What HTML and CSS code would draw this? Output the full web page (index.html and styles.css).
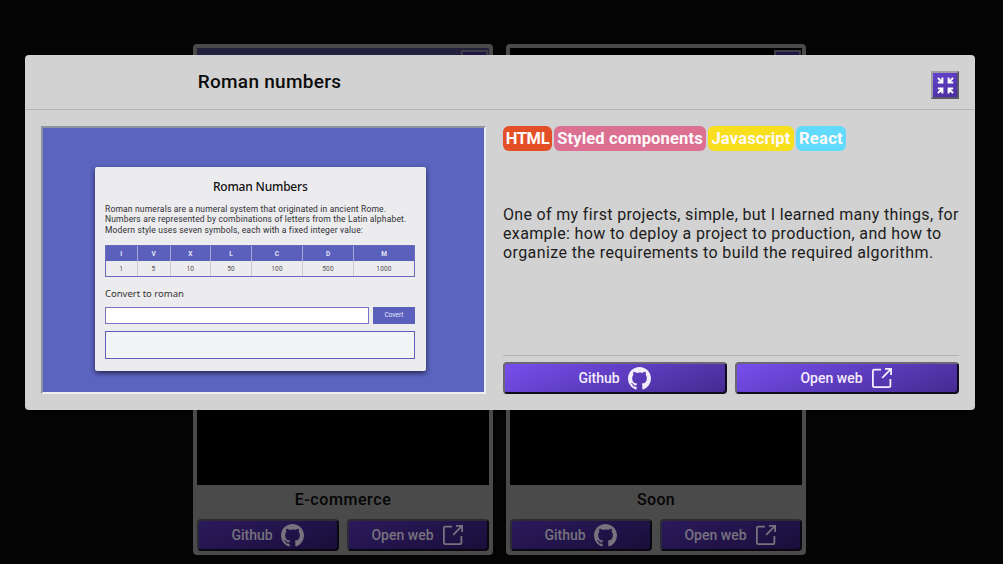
FILE: index.html
```
<!DOCTYPE html>
<html lang="en">
<head>
<meta charset="utf-8">
<title>Projects</title>
<link rel="stylesheet" href="styles.css">
</head>
<body>
<svg class="sprite" aria-hidden="true">
  <symbol id="github" viewBox="0 0 16 16"><path fill="currentColor" fill-rule="evenodd" d="M8 0C3.58 0 0 3.58 0 8c0 3.54 2.29 6.53 5.47 7.59.4.07.55-.17.55-.38 0-.19-.01-.82-.01-1.49-2.01.37-2.53-.49-2.69-.94-.09-.23-.48-.94-.82-1.13-.28-.15-.68-.52-.01-.53.63-.01 1.08.58 1.23.82.72 1.21 1.87.87 2.33.66.07-.52.28-.87.51-1.07-1.78-.2-3.64-.89-3.64-3.95 0-.87.31-1.59.82-2.15-.08-.2-.36-1.02.08-2.12 0 0 .67-.21 2.2.82A7.6 7.6 0 0 1 8 3.86c.68 0 1.36.09 2 .27 1.53-1.04 2.2-.82 2.2-.82.44 1.1.16 1.92.08 2.12.51.56.82 1.27.82 2.15 0 3.07-1.87 3.75-3.65 3.95.29.25.54.73.54 1.48 0 1.07-.01 1.93-.01 2.2 0 .21.15.46.55.38A8.01 8.01 0 0 0 16 8c0-4.42-3.58-8-8-8z"/></symbol>
  <symbol id="open" viewBox="0 0 20 20"><path fill="none" stroke="currentColor" stroke-width="1.8" d="M9 1.6H2.2Q.9 1.6.9 2.9V17.8Q.9 19.1 2.2 19.1H17.1Q18.4 19.1 18.4 17.8V11M10.2 9.8 18.8 1.2M13 .9H19.1V7"/></symbol>
  <symbol id="shrink" viewBox="0 0 17 17"><path fill="none" stroke="currentColor" stroke-width="2" d="M.9.9 5 5M5.4 .6V5.4H.8M16.1.9 12 5M11.6.6V5.4H16.2M.9 16.1 5 12M5.4 16.4V11.6H.8M16.1 16.1 12 12M11.6 16.4V11.6H16.2"/></symbol>
</svg>
<main class="projects">
  <article class="card">
    <div class="card-image card-image--blue"><span class="expand"></span></div>
    <h3 class="card-title card-title--wide">E-commerce</h3>
    <div class="actions">
      <a class="button">Github<svg class="icon-github"><use href="#github"/></svg></a>
      <a class="button">Open web<svg class="icon-open"><use href="#open"/></svg></a>
    </div>
  </article>
  <article class="card">
    <div class="card-image"><span class="expand"></span></div>
    <h3 class="card-title">Soon</h3>
    <div class="actions">
      <a class="button">Github<svg class="icon-github"><use href="#github"/></svg></a>
      <a class="button">Open web<svg class="icon-open"><use href="#open"/></svg></a>
    </div>
  </article>
</main>
<div class="overlay">
  <section class="modal">
    <header class="modal-header">
      <h2 class="modal-title">Roman numbers</h2>
      <button class="close" aria-label="Close"><svg class="icon-shrink"><use href="#shrink"/></svg></button>
    </header>
    <div class="modal-body">
      <div class="preview">
        <div class="sheet">
          <h4 class="sheet-title">Roman Numbers</h4>
          <p class="sheet-text">Roman numerals are a numeral system that originated in ancient Rome.<br>Numbers are represented by combinations of letters from the Latin alphabet.<br>Modern style uses seven symbols, each with a fixed integer value:</p>
          <div class="numerals">
            <b>I</b><b>V</b><b>X</b><b>L</b><b>C</b><b>D</b><b>M</b>
            <i>1</i><i>5</i><i>10</i><i>50</i><i>100</i><i>500</i><i>1000</i>
          </div>
          <p class="sheet-label">Convert to roman</p>
          <div class="sheet-form"><span class="field"></span><span class="convert">Covert</span></div>
          <div class="result"></div>
        </div>
      </div>
      <div class="details">
        <div class="tags"><span class="tag tag--html">HTML</span><span class="tag tag--styled">Styled components</span><span class="tag tag--js">Javascript</span><span class="tag tag--react">React</span></div>
        <p class="description"><span class="line-1">One of my first projects, simple, but I learned many things, for</span><br><span class="line-2">example: how to deploy a project to production, and how to</span><br><span class="line-3">organize the requirements to build the required algorithm.</span></p>
        <div class="actions actions--modal">
          <a class="button">Github<svg class="icon-github"><use href="#github"/></svg></a>
          <a class="button">Open web<svg class="icon-open"><use href="#open"/></svg></a>
        </div>
      </div>
    </div>
  </section>
</div>
</body>
</html>
```
FILE: styles.css
```
* { box-sizing: border-box; }
body {
  margin: 0;
  height: 564px;
  overflow: hidden;
  background: #040405;
  font-family: Roboto, "Open Sans", sans-serif;
}
h2, h3, h4, p { margin: 0; }
.sprite { display: none; }
.projects { display: flex; gap: 13px; padding: 44px 0 0 193px; }
.card {
  width: 300px;
  height: 511px;
  border: 4px solid #4a4a4a;
  border-radius: 4px;
  background: #4a4a4a;
  display: flex;
  flex-direction: column;
}
.card-image { height: 437px; background: #000; display: flex; justify-content: flex-end; padding: 2px 1px; }
.card-image--blue { background: linear-gradient(#23213c 0 100px, #000 100px); }
.expand { width: 27px; height: 28px; border: 2px solid #3d3b45; background: #211545; }
.card-title { height: 34px; font-size: 16px; line-height: 29px; font-weight: 500; letter-spacing: .3px; text-align: center; color: #050505; }
.card-title--wide { letter-spacing: .58px; }
.actions { display: grid; grid-template-columns: 1fr 1fr; gap: 8px; }
.button {
  height: 32px;
  border: 2px solid;
  border-color: #2c2a35 #08060e #08060e #2c2a35;
  border-radius: 4px;
  background: linear-gradient(160deg, #2b1a5c, #190e3a);
  color: #77727d;
  display: flex;
  align-items: center;
  justify-content: center;
  gap: 8px;
  padding-right: 1px;
  font-size: 14px;
  font-weight: 500;
}
.icon-github { width: 23px; height: 23px; }
.icon-open { width: 20px; height: 20px; margin: 0 1px; }
.overlay { position: absolute; inset: 0; padding: 55px 28px 0 25px; }
.modal { height: 355px; border-radius: 4px; background: #d2d2d2; overflow: hidden; }
.modal-header {
  height: 55px;
  border-bottom: 1px solid #b4b4b4;
  padding: 0 16px;
  display: grid;
  grid-template-columns: 457px 1fr;
  align-items: center;
}
.modal-title { text-align: center; font-size: 19px; line-height: 22px; font-weight: 500; letter-spacing: .28px; color: #0b0b0b; }
.close {
  justify-self: end;
  width: 28px;
  height: 28px;
  margin-top: 6px;
  padding: 0;
  border: 2px solid;
  border-color: #a09da6 #5b5765 #5b5765 #a09da6;
  background: linear-gradient(160deg, #6443cf, #4a2d9e);
  color: #fff;
  display: grid;
  place-items: center;
}
.icon-shrink { width: 17px; height: 17px; }
.modal-body { display: grid; grid-template-columns: 445px 456px; gap: 17px; padding: 16px; }
.preview {
  height: 268px;
  border: 2px solid;
  border-color: #8d92a0 #eceef2 #eceef2 #8d92a0;
  background: #5b64be;
  padding: 38.5px 0 0 52px;
}
.sheet {
  width: 330.5px;
  height: 204px;
  padding: 12px 10px 0;
  border-radius: 2px;
  background: #ecebee;
  box-shadow: 0 2px 5px #20244f;
}
.sheet-title { font: 500 12px/16px "Noto Sans", sans-serif; letter-spacing: -.2px; text-align: center; color: #111; }
.sheet-text { margin-top: 9px; height: 41.5px; font-size: 8.5px; line-height: 10.6px; letter-spacing: .168px; color: #303035; white-space: nowrap; }
.numerals {
  height: 32px;
  width: 310px;
  border: 1px solid #6a69bd;
  display: grid;
  grid-template-columns: 31.5px 33px 40.5px 41px 51px 51px 60px;
  grid-template-rows: 15px 15px;
  font-size: 6.5px;
  line-height: 16px;
  text-align: center;
}
.numerals b { background: #5b60bd; color: #e5e6f6; border-right: 1px solid #a5a6dc; }
.numerals i { font-style: normal; letter-spacing: .2px; color: #505055; border-right: 1px solid #c9c9d0; }
.numerals :nth-child(7n) { border-right: 0; }
.sheet-label { margin-top: 10px; font: 9.5px/14px "Noto Sans", sans-serif; color: #333; }
.sheet-form { margin-top: 6px; display: grid; grid-template-columns: 264px 42px; gap: 4px; height: 16px; }
.field { border: 1px solid #7672c4; background: #fff; }
.convert { background: #5b60bd; color: #e6e7f8; font-size: 6.5px; line-height: 17px; text-align: center; }
.result { margin-top: 8px; width: 310px; height: 28px; border: 1px solid #625db8; background: #f3f4f7; }
.details { height: 268px; display: flex; flex-direction: column; }
.tags { display: flex; gap: 2px; color: #fffafa; font-size: 16.5px; font-weight: 700; }
.tag { height: 25px; line-height: 25px; border-radius: 6px; text-align: center; white-space: nowrap; }
.tag--html { width: 49px; background: #e34f26; letter-spacing: -.4px; }
.tag--styled { width: 152px; background: #db7093; letter-spacing: .15px; }
.tag--js { width: 86px; background: #f7df1e; letter-spacing: .17px; }
.tag--react { width: 50px; background: #61dafb; letter-spacing: .3px; }
.description { margin-top: 54px; font-size: 16px; line-height: 19px; color: #1c1c1c; white-space: nowrap; }
.line-1 { letter-spacing: .33px; }
.line-2 { letter-spacing: .355px; }
.line-3 { letter-spacing: .395px; }
.actions--modal { margin-top: auto; border-top: 1px solid #b4b4b4; padding-top: 6px; }
.actions--modal .button {
  border-color: #6a6675 #110c1d #110c1d #6a6675;
  background: linear-gradient(160deg, #774eee, #442b90);
  color: #f4edfa;
}
```
